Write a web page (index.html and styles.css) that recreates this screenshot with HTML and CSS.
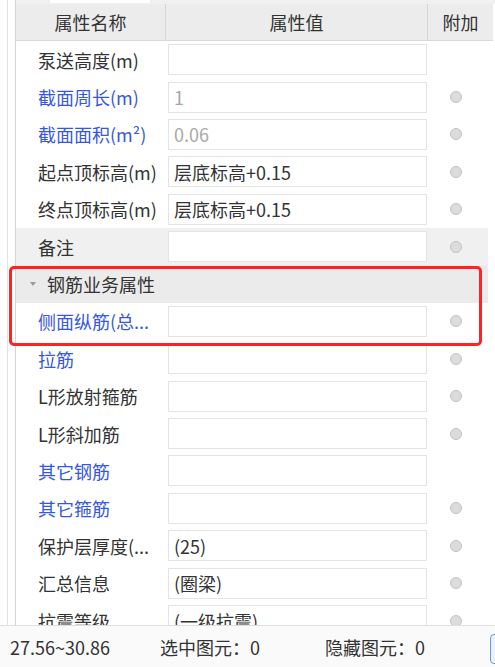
FILE: index.html
```html
<!DOCTYPE html>
<html lang="zh">
<head>
<meta charset="utf-8">
<link rel="stylesheet" href="styles.css">
</head>
<body>
<div class="app">
  <div class="main">
    <div class="gutter"><div class="gline"></div></div>
    <div class="panel">
      <div class="topstrip"><div class="topinset"></div></div>
      <div class="head">
        <div class="hcell">属性名称</div>
        <div class="hcell">属性值</div>
        <div class="hcell last">附加</div>
      </div>
      <div class="rows">
        <div class="row"><div class="name">泵送高度(m)</div><div class="val"><div class="box"></div></div><div class="ext"></div></div>
        <div class="row"><div class="name blue">截面周长(m)</div><div class="val"><div class="box dim">1</div></div><div class="ext"><span class="radio"></span></div></div>
        <div class="row"><div class="name blue">截面面积(m²)</div><div class="val"><div class="box dim">0.06</div></div><div class="ext"><span class="radio"></span></div></div>
        <div class="row"><div class="name">起点顶标高(m)</div><div class="val"><div class="box">层底标高+0.15</div></div><div class="ext"><span class="radio"></span></div></div>
        <div class="row"><div class="name">终点顶标高(m)</div><div class="val"><div class="box">层底标高+0.15</div></div><div class="ext"><span class="radio"></span></div></div>
        <div class="row grey"><div class="name">备注</div><div class="val"><div class="box"></div></div><div class="ext"><span class="radio"></span></div></div>
        <div class="group"><span class="tri"></span><span>钢筋业务属性</span></div>
        <div class="row"><div class="name blue">侧面纵筋(总...</div><div class="val"><div class="box"></div></div><div class="ext"><span class="radio"></span></div></div>
        <div class="row"><div class="name blue">拉筋</div><div class="val"><div class="box"></div></div><div class="ext"><span class="radio"></span></div></div>
        <div class="row"><div class="name">L形放射箍筋</div><div class="val"><div class="box"></div></div><div class="ext"><span class="radio"></span></div></div>
        <div class="row"><div class="name">L形斜加筋</div><div class="val"><div class="box"></div></div><div class="ext"><span class="radio"></span></div></div>
        <div class="row"><div class="name blue">其它钢筋</div><div class="val"><div class="box"></div></div><div class="ext"></div></div>
        <div class="row"><div class="name blue">其它箍筋</div><div class="val"><div class="box"></div></div><div class="ext"><span class="radio"></span></div></div>
        <div class="row"><div class="name">保护层厚度(...</div><div class="val"><div class="box">(25)</div></div><div class="ext"><span class="radio"></span></div></div>
        <div class="row"><div class="name">汇总信息</div><div class="val"><div class="box">(圈梁)</div></div><div class="ext"><span class="radio"></span></div></div>
        <div class="row"><div class="name">抗震等级</div><div class="val"><div class="box">(一级抗震)</div></div><div class="ext"><span class="radio"></span></div></div>
      </div>
    </div>
    <div class="highlight"></div>
  </div>
  <div class="status">
    <span class="s1">27.56~30.86</span>
    <span class="s2">选中图元：0</span>
    <span class="s3">隐藏图元：0</span>
    <span class="sbtn"></span>
  </div>
</div>
</body>
</html>
```

FILE: styles.css
```css
html, body {
  margin: 0;
  padding: 0;
  background: #ffffff;
}
body {
  width: 495px;
  height: 667px;
  overflow: hidden;
  font-family: "Noto Sans CJK SC", "Noto Sans", sans-serif;
  font-size: 18px;
  color: #333333;
}
.app {
  display: flex;
  flex-direction: column;
  height: 667px;
  overflow: hidden;
}
.main {
  position: relative;
  display: flex;
  height: 625px;
  flex: none;
  overflow: hidden;
}
.gutter {
  width: 15px;
  flex: none;
  border-right: 1px solid #d4d4d4;
  display: flex;
}
.gline {
  margin-left: 7px;
  width: 1px;
  background: #e2e2e2;
}
.panel {
  flex: 1;
  display: flex;
  flex-direction: column;
  overflow: hidden;
}
.topstrip {
  flex: none;
  height: 4px;
  background: #f0f0f0;
  display: flex;
}
.topinset {
  margin-left: 34px;
  width: 100px;
  height: 3px;
  background: #ffffff;
}
.head {
  flex: none;
  width: 477px;
  height: 36px;
  display: grid;
  grid-template-columns: 150px 262px 1fr;
  background: #ececec;
  border-bottom: 1px solid #d9d9d9;
}
.hcell {
  display: flex;
  align-items: center;
  justify-content: center;
  border-right: 1px solid #d6d6d6;
  font-size: 18px;
  color: #333;
}
.hcell.last {
  border-right: none;
}
.rows {
  flex: none;
  width: 472px;
  display: flex;
  flex-direction: column;
}
.row {
  height: 37.4px;
  flex: none;
  display: grid;
  grid-template-columns: 150px 262px 1fr;
  align-items: center;
}
.row.grey {
  background: #f0f0f0;
}
.name {
  padding-left: 22px;
  white-space: nowrap;
  overflow: hidden;
  color: #333333;
}
.name.blue {
  color: #3657e0;
}
.val {
  padding-left: 2px;
}
.box {
  box-sizing: border-box;
  width: 259px;
  height: 31px;
  border: 1.5px solid #e4e4e4;
  background: #ffffff;
  padding-left: 5px;
  display: flex;
  align-items: center;
  color: #333333;
  white-space: nowrap;
  overflow: hidden;
}
.box.dim {
  color: #a8a8a8;
}
.ext {
  display: flex;
  justify-content: center;
  padding-right: 4px;
}
.radio {
  box-sizing: border-box;
  width: 12px;
  height: 12px;
  border-radius: 50%;
  background: #dcdcdc;
  border: 1px solid #c2c2c2;
}
.group {
  height: 37.4px;
  flex: none;
  display: flex;
  align-items: center;
  background: #ebebeb;
  color: #333333;
}
.tri {
  width: 0;
  height: 0;
  margin-left: 14px;
  margin-right: 11px;
  border-left: 3.5px solid transparent;
  border-right: 3.5px solid transparent;
  border-top: 4px solid #9a9a9a;
}
.highlight {
  position: absolute;
  left: 9px;
  top: 266px;
  width: 473px;
  height: 80px;
  box-sizing: border-box;
  border: 3px solid #ff2222;
  border-radius: 5px;
}
.status {
  position: relative;
  flex: none;
  height: 42px;
  box-sizing: border-box;
  border-top: 1px solid #dedede;
  background: #fafafa;
  display: flex;
  align-items: center;
  font-size: 18px;
  color: #333333;
  overflow: hidden;
}
.s1 {
  margin-left: 10px;
  width: 150px;
}
.s2 {
  width: 165px;
}
.s3 {
  width: 160px;
}
.sbtn {
  position: absolute;
  left: 490px;
  top: 8px;
  width: 30px;
  height: 30px;
  box-sizing: border-box;
  border: 1.5px solid #6a9ad8;
  border-radius: 4px;
  background: #e8f1fc;
}
```
